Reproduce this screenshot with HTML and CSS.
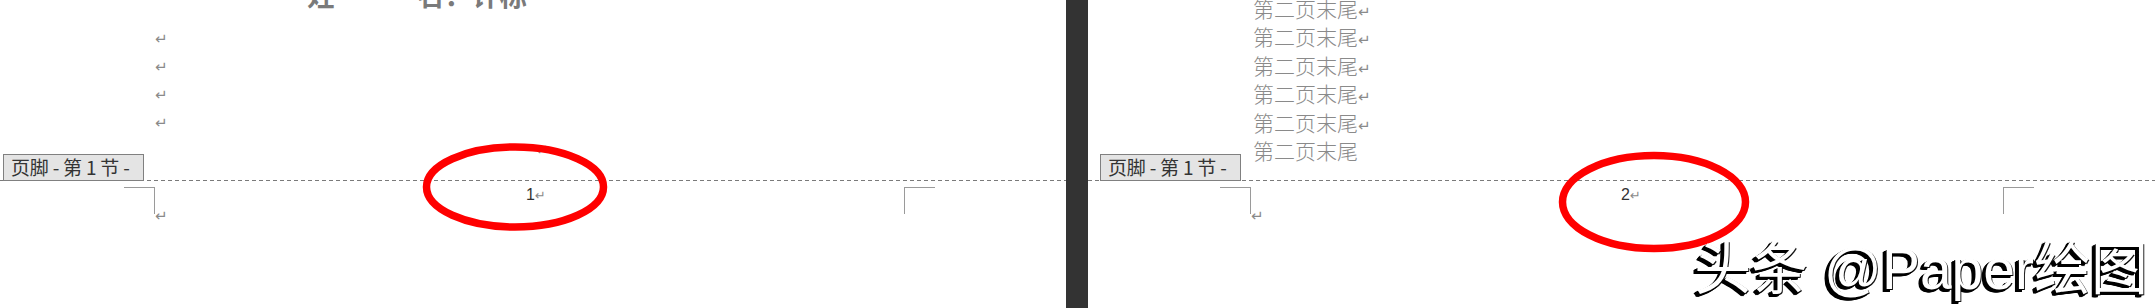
FILE: index.html
```html
<!DOCTYPE html>
<html lang="zh-CN">
<head>
<meta charset="utf-8">
<title>页脚</title>
<link rel="stylesheet" href="styles.css">
</head>
<body>
<div class="doc">
  <section class="page page-left">
    <div class="body">
      <div class="title">姓　　　名：许栎</div>
      <div class="line"><span class="pm">↵</span></div>
      <div class="line"><span class="pm">↵</span></div>
      <div class="line"><span class="pm">↵</span></div>
      <div class="line"><span class="pm">↵</span></div>
      <div class="line line-mid"><span class="pm">↵</span></div>
    </div>
    <div class="footer">
      <span class="tag">页脚 - 第 1 节 -</span>
      <div class="crop crop-l"></div>
      <span class="pm pm-foot">↵</span>
      <span class="pagenum">1<span class="pm">↵</span></span>
      <div class="crop crop-r"></div>
    </div>
    <svg class="ring ring-left" width="190" height="95" viewBox="0 0 190 95">
      <ellipse cx="95" cy="47" rx="88.5" ry="40" fill="none" stroke="#ff0000" stroke-width="7.5"/>
    </svg>
  </section>
  <div class="gutter"></div>
  <section class="page page-right">
    <div class="body">
      <div class="line tail">第二页末尾<span class="pm">↵</span></div>
      <div class="line tail">第二页末尾<span class="pm">↵</span></div>
      <div class="line tail">第二页末尾<span class="pm">↵</span></div>
      <div class="line tail">第二页末尾<span class="pm">↵</span></div>
      <div class="line tail">第二页末尾<span class="pm">↵</span></div>
      <div class="line tail">第二页末尾</div>
    </div>
    <div class="footer">
      <span class="tag">页脚 - 第 1 节 -</span>
      <div class="crop crop-l"></div>
      <span class="pm pm-foot">↵</span>
      <span class="pagenum">2<span class="pm">↵</span></span>
      <div class="crop crop-r"></div>
    </div>
    <svg class="ring ring-right" width="200" height="108" viewBox="0 0 200 108">
      <ellipse cx="100" cy="54" rx="91.5" ry="46.5" fill="none" stroke="#ff0000" stroke-width="7.5"/>
    </svg>
  </section>
  <div class="watermark">头条 @Paper绘图</div>
</div>
</body>
</html>
```

FILE: styles.css
```css
html, body {
  margin: 0;
  padding: 0;
  width: 2155px;
  height: 308px;
  overflow: hidden;
  background: #ffffff;
}

.doc {
  position: relative;
  display: flex;
  width: 2155px;
  height: 308px;
  font-family: "Noto Sans CJK SC", "Liberation Sans", sans-serif;
}

.page {
  position: relative;
  display: grid;
  grid-template-rows: 180px 1fr;
  background: #ffffff;
}

.page-left {
  width: 1066px;
}

.page-right {
  flex: 1;
}

.gutter {
  width: 22px;
  background: #333333;
}

.body {
  overflow: visible;
}

.page-left .body {
  padding-left: 155px;
}

.page-right .body {
  padding-left: 165px;
}

.title {
  margin-top: -20px;
  margin-left: 152px;
  margin-bottom: 15px;
  height: 28px;
  line-height: 28px;
  font-size: 27.5px;
  font-weight: 700;
  color: #7a7a7a;
  white-space: nowrap;
}

.line {
  height: 28px;
  line-height: 28px;
  white-space: nowrap;
}

.line-mid {
  padding-left: 381px;
  margin-top: -1px;
}

.pm {
  font-family: "DejaVu Sans", sans-serif;
  font-size: 15px;
  color: #8a8a8a;
  font-weight: 400;
}

.tail {
  height: 28.4px;
  line-height: 28.4px;
  font-size: 21px;
  font-weight: 300;
  color: #8a8a8a;
}

.tail:first-child {
  margin-top: -6px;
}

.tail .pm {
  font-size: 15px;
}

.footer {
  position: relative;
  display: flex;
  align-items: flex-start;
  background: repeating-linear-gradient(to right, #7a7a7a 0 4px, transparent 4px 7px) top left / 100% 1px no-repeat;
}

.tag {
  position: absolute;
  top: -26px;
  box-sizing: border-box;
  height: 27px;
  width: 141px;
  padding-left: 7px;
  border: 1px solid #808080;
  background: #e4e4e4;
  color: #333333;
  font-size: 19px;
  line-height: 24px;
  letter-spacing: -0.2px;
  white-space: nowrap;
}

.page-left .tag {
  left: 3px;
}

.page-right .tag {
  left: 12px;
}

.crop {
  flex: none;
  width: 30px;
  height: 26px;
  margin-top: 7px;
  border-top: 1px solid #9a9a9a;
}

.crop-l {
  border-right: 1px solid #9a9a9a;
}

.crop-r {
  border-left: 1px solid #9a9a9a;
  margin-left: auto;
}

.page-left .crop-l {
  margin-left: 124px;
}

.page-right .crop-l {
  margin-left: 132px;
}

.page-left .crop-r {
  margin-right: 131px;
}

.page-right .crop-r {
  margin-right: 121px;
}

.pm-foot {
  flex: none;
  width: 10px;
  margin-top: 28px;
  line-height: 16px;
}

.pagenum {
  flex: none;
  margin-top: 6px;
  line-height: 18px;
  font-family: "Liberation Sans", sans-serif;
  font-size: 16px;
  color: #333333;
}

.pagenum .pm {
  font-size: 13px;
}

.page-left .pagenum {
  margin-left: 361px;
}

.page-right .pagenum {
  margin-left: 360px;
}

.ring {
  position: absolute;
  pointer-events: none;
}

.ring-left {
  left: 420px;
  top: 140px;
}

.ring-right {
  left: 466px;
  top: 148px;
}

.watermark {
  position: absolute;
  right: 7px;
  top: 239px;
  font-family: "Liberation Sans", "Noto Sans CJK SC", sans-serif;
  font-size: 57px;
  line-height: 60px;
  color: #ffffff;
  white-space: nowrap;
  text-shadow: -1px 1px 0 #000000, -2px 2px 0 #000000, -3px 3px 0 #000000, -2px 3px 0 #000000, -3px 2px 0 #000000, -4px 3px 0 #000000, 0 1px 0 #000000, 1px 1px 0 #222222;
}
```
